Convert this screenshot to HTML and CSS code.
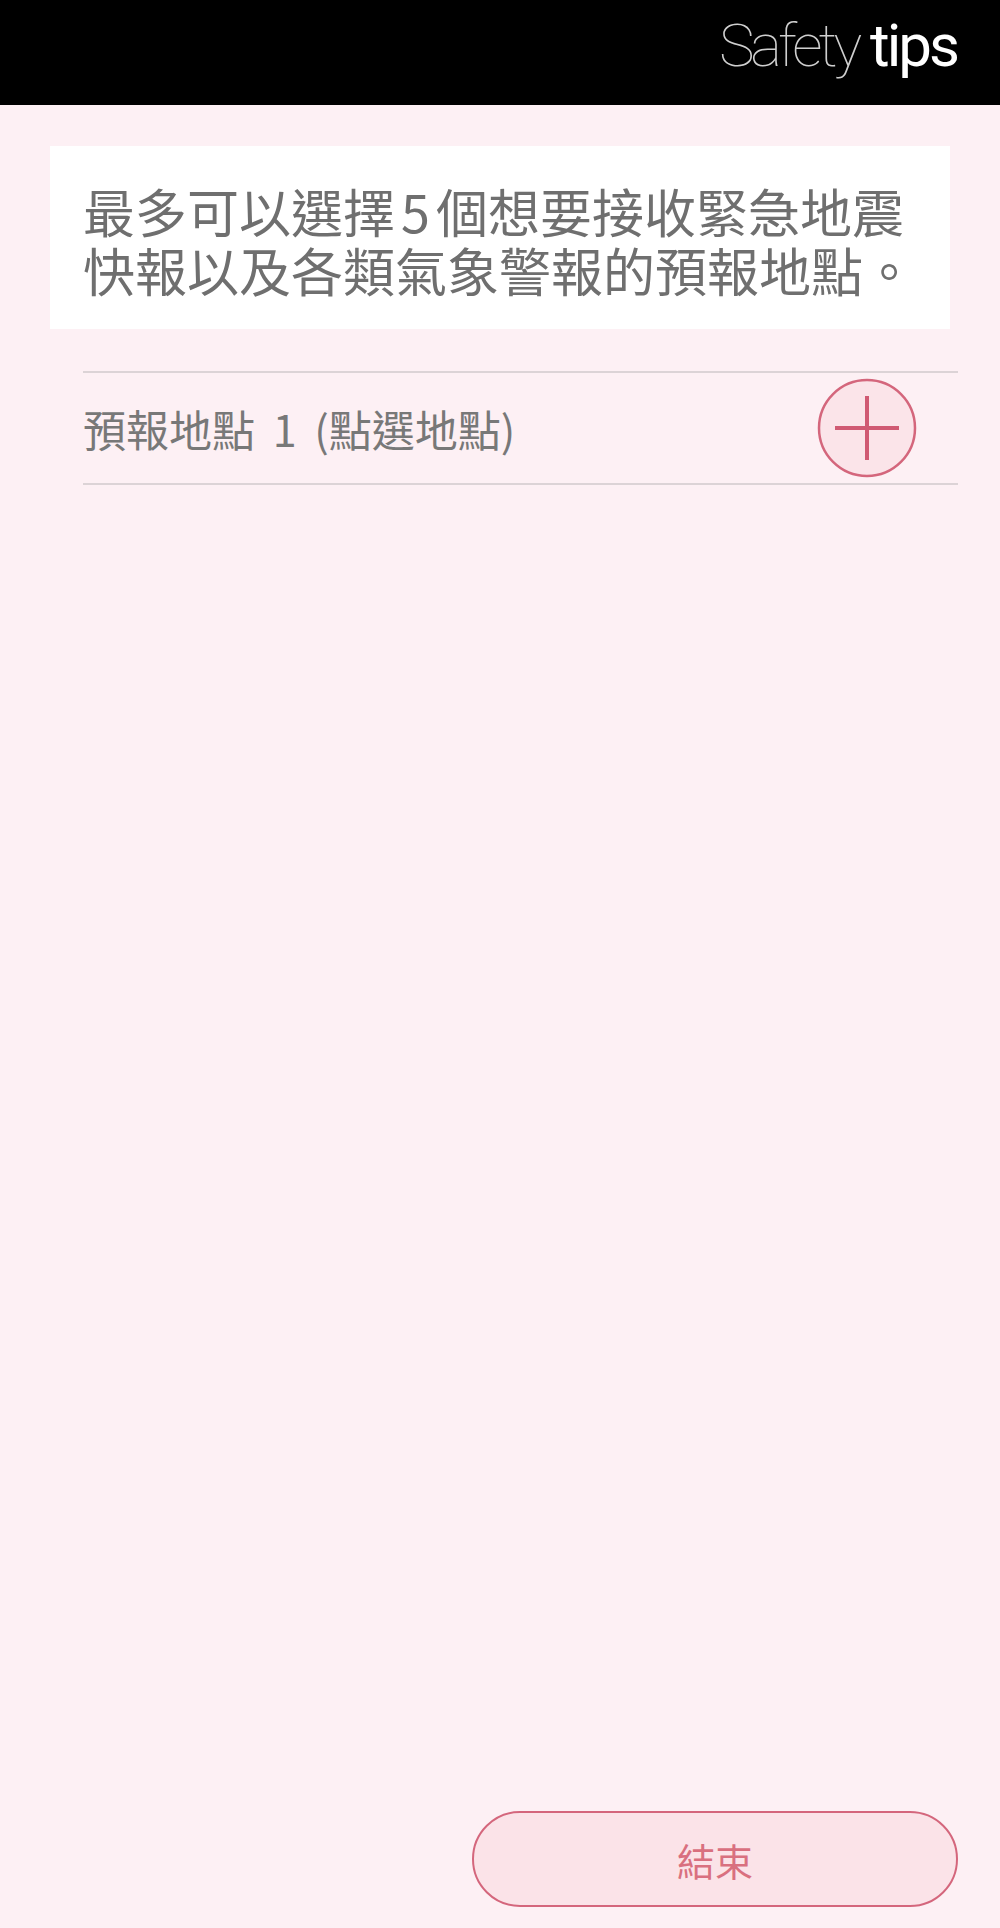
FILE: index.html
```html
<!DOCTYPE html>
<html lang="zh-Hant">
<head>
  <meta charset="UTF-8">
  <title>預報地點</title>
  <link rel="stylesheet" href="styles.css">
</head>
<body>
  <header class="top-bar">
    <div class="logo"><span class="logo-light">Safety</span><span class="logo-bold">tips</span></div>
  </header>

  <main class="content">
    <div class="notice">
      最多可以選擇<span class="num">5</span>個想要接收緊急地震<br>快報以及各類氣象警報的預報地點。
    </div>

    <ul class="place-list">
      <li class="place-row">
        <span class="place-name">預報地點 1 (點選地點)</span>
        <button class="add-btn" type="button" aria-label="新增">
          <svg width="100" height="100" viewBox="0 0 100 100">
            <circle cx="50" cy="50" r="48" fill="#fbe4e9" stroke="#d4667c" stroke-width="2.5"/>
            <path d="M50 18 V82 M18 50 H82" stroke="#d05a73" stroke-width="4" fill="none"/>
          </svg>
        </button>
      </li>
    </ul>
  </main>

  <footer class="bottom">
    <button class="finish-btn" type="button">結束</button>
  </footer>
</body>
</html>
```

FILE: styles.css
```css
body {
  margin: 0;
  height: 1928px;
  display: flex;
  flex-direction: column;
  background-color: #fdf0f4;
  font-family: "Noto Sans CJK TC", "Noto Sans", sans-serif;
}

.top-bar {
  height: 105px;
  background-color: #000;
  display: flex;
  justify-content: flex-end;
  align-items: flex-start;
  padding-right: 43px;
}

.logo {
  font-family: Roboto, "Liberation Sans", sans-serif;
  font-size: 60px;
  line-height: 1;
  margin-top: 16px;
}

.logo-light {
  font-weight: 100;
  color: #cfcfcf;
  letter-spacing: -4px;
  margin-right: 12px;
}

.logo-bold {
  font-weight: 400;
  color: #fff;
  letter-spacing: -3px;
}

.content {
  flex: 1;
  padding: 41px 42px 0 50px;
}

.notice {
  background-color: #fff;
  color: #6f6f6f;
  font-size: 52px;
  line-height: 59px;
  padding: 35px 20px 30px 33px;
  margin-right: 8px;
  white-space: nowrap;
}

.num {
  margin: 0 6px;
}

.place-list {
  list-style: none;
  margin: 42px 0 0 33px;
  padding: 0;
}

.place-row {
  display: flex;
  align-items: center;
  justify-content: space-between;
  height: 110px;
  border-top: 2px solid #dcd3d6;
  border-bottom: 2px solid #dcd3d6;
}

.place-name {
  color: #787878;
  font-size: 43px;
  word-spacing: 8px;
}

.add-btn {
  background: none;
  border: none;
  padding: 0;
  margin-right: 41px;
  width: 100px;
  height: 100px;
  cursor: pointer;
}

.add-btn svg {
  display: block;
}

.bottom {
  display: flex;
  justify-content: flex-end;
  padding: 0 42px 21px 0;
}

.finish-btn {
  width: 486px;
  height: 96px;
  border-radius: 48px;
  border: 2.5px solid #d4667c;
  background-color: #fbe3e8;
  color: #d9707f;
  font-family: "Noto Sans CJK TC", sans-serif;
  font-size: 38px;
  cursor: pointer;
}
```
